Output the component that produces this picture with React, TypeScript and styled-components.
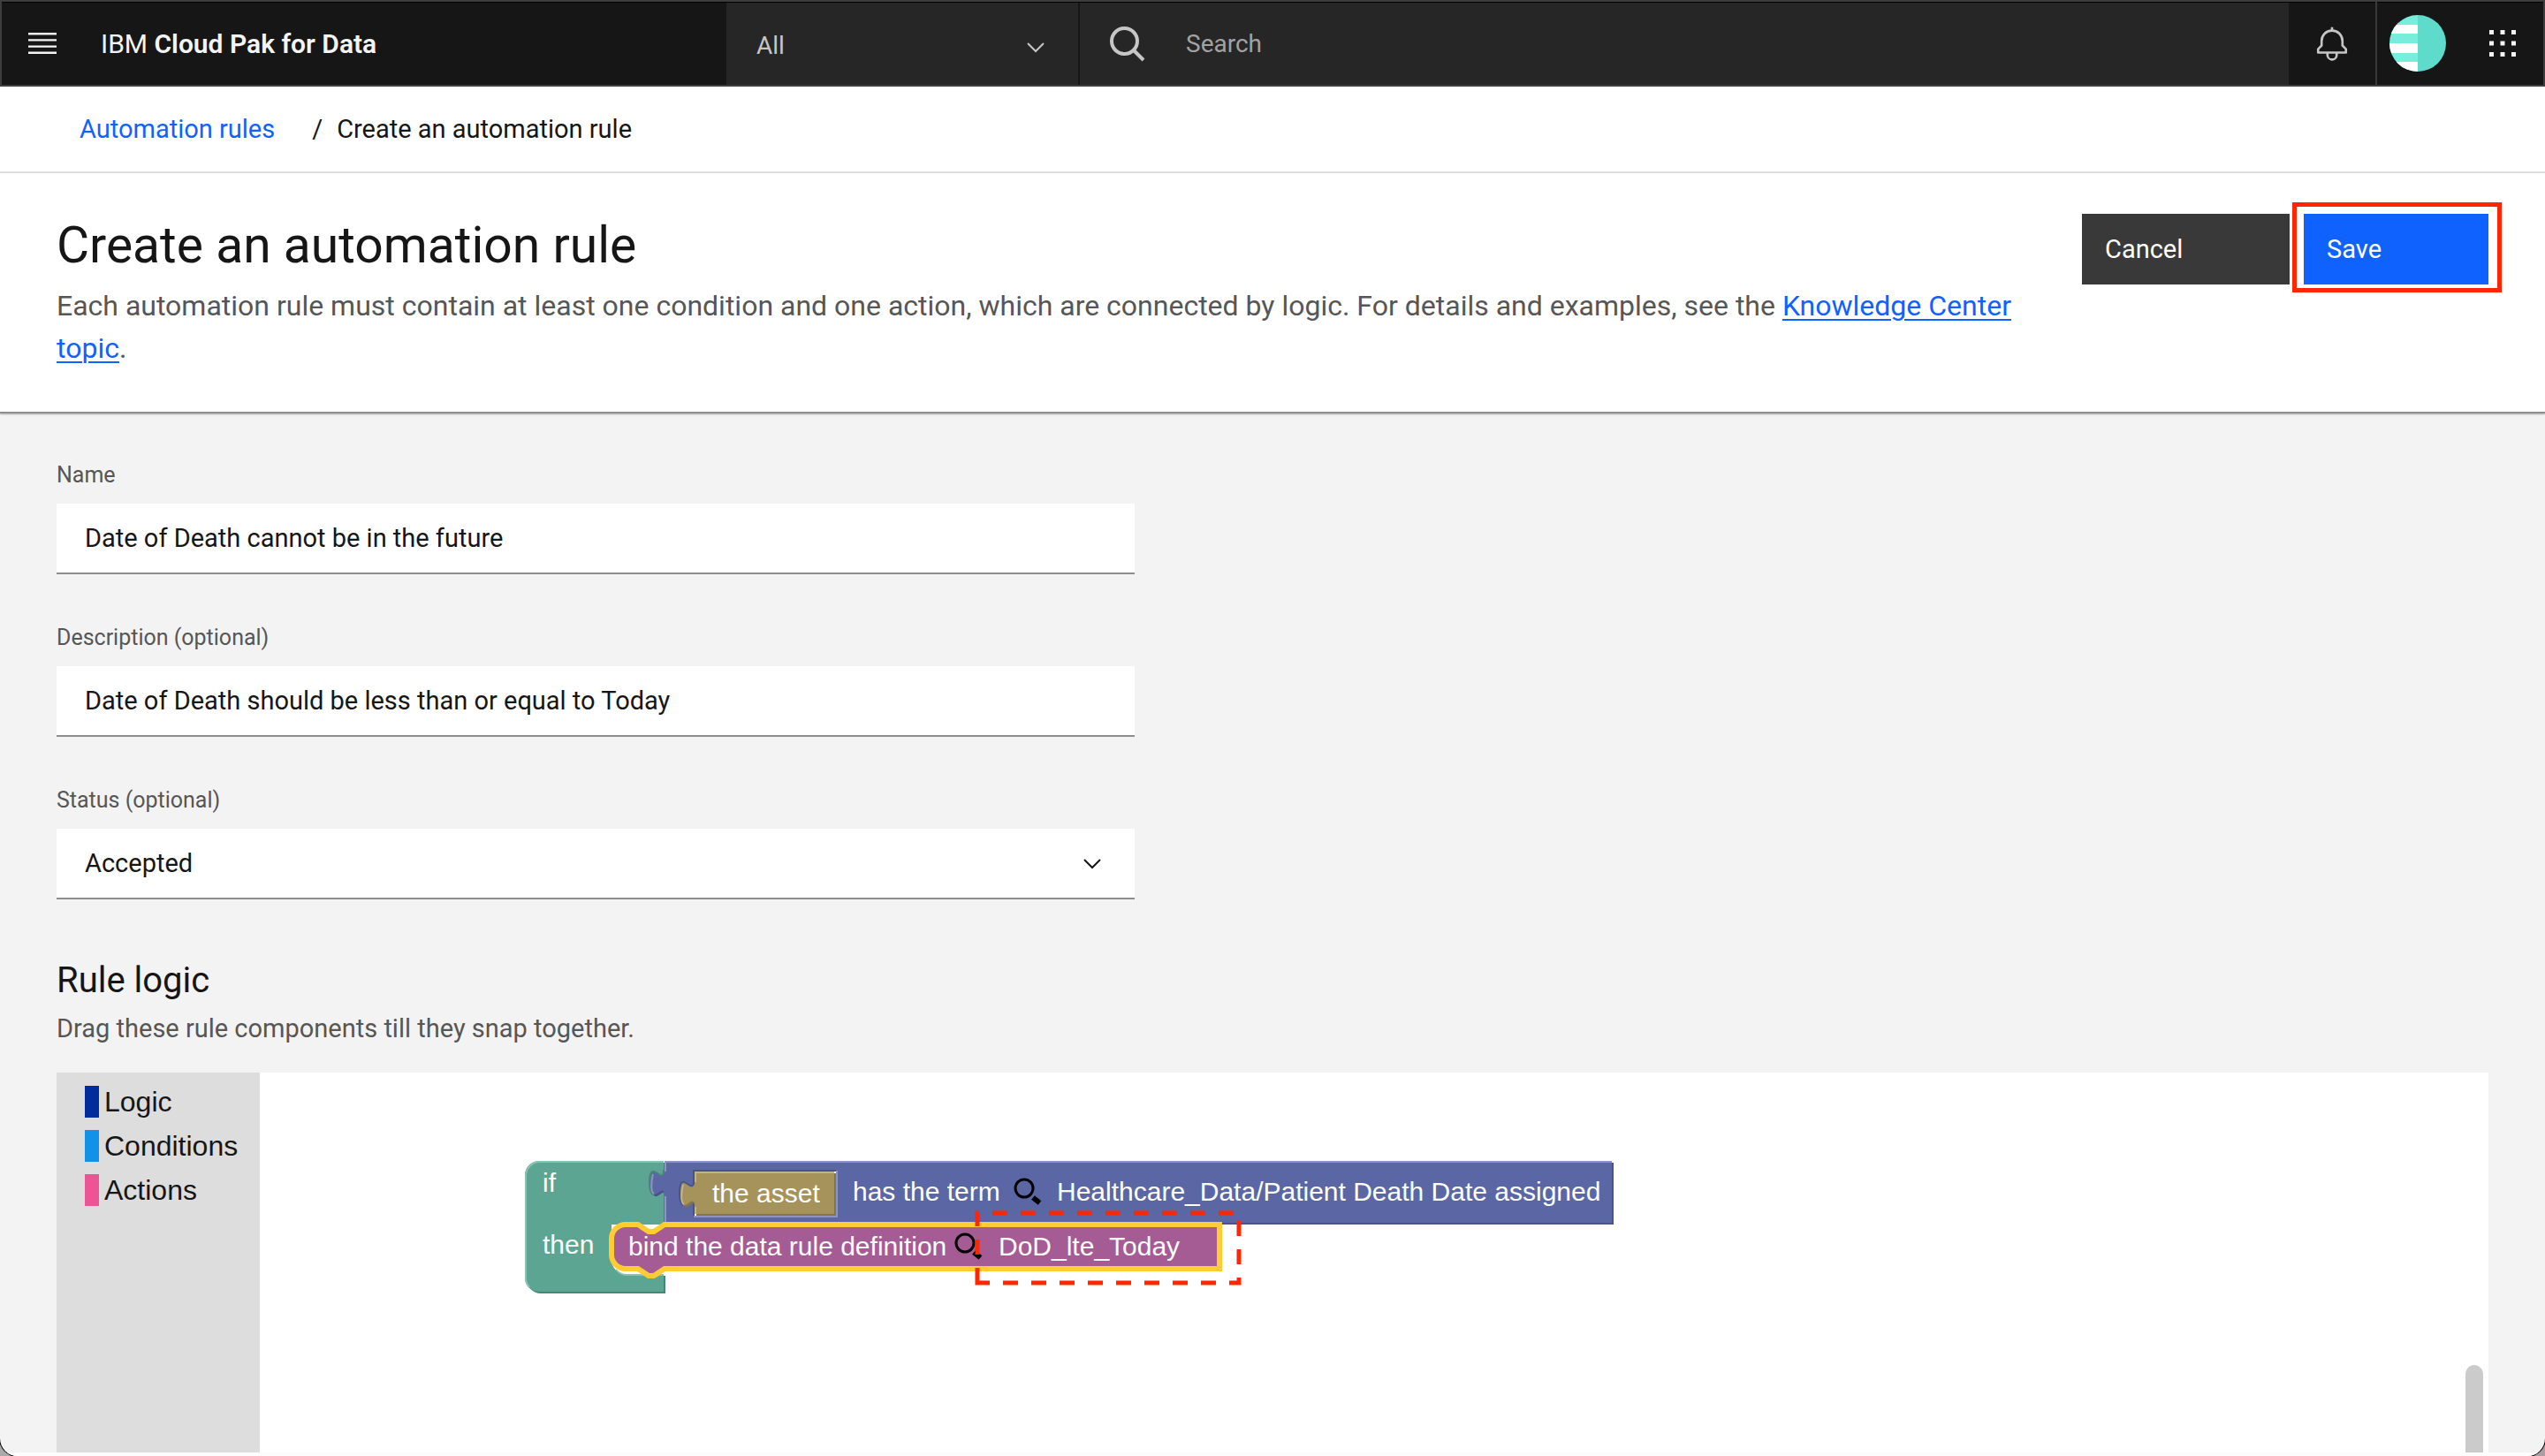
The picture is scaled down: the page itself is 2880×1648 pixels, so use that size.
import React from 'react';
import styled, { createGlobalStyle } from 'styled-components';

const GlobalStyle = createGlobalStyle`
  *, *::before, *::after { box-sizing: border-box; }
  html, body { margin: 0; padding: 0; }
  body {
    background: linear-gradient(90deg, #a9a9a9, #b09ca3);
    font-family: Roboto, "Noto Sans", sans-serif;
    font-size: 29px;
    color: #161616;
  }
  h1, h2, p, ol, ul { margin: 0; padding: 0; font-weight: 400; }
  ol, ul { list-style: none; }
  button, input, select { font: inherit; border: 0; border-radius: 0; outline: 0; }
`;

const Window = styled.div`
  display: flex;
  flex-direction: column;
  min-height: 100vh;
  overflow: hidden;
  background: #f3f3f3;
  border-radius: 0 0 20px 20px;
  box-shadow: 0 0 0 1px #000;
`;

/* ---------- top bar ---------- */

const TopBar = styled.header`
  display: grid;
  grid-template-columns: 820px 400px minmax(0, 1fr) 98px 190px;
  height: 98px;
  background: #161616;
  border: 2px solid #3d3d3d;
  box-shadow: inset 0 1px 0 #000;
  font-size: 28px;
`;

const Brand = styled.div`
  display: flex;
  align-items: center;
  gap: 46px;
  padding-left: 26px;
`;

const IconButton = styled.button`
  display: flex;
  align-items: center;
  justify-content: center;
  padding: 0;
  background: transparent;
  color: ${(p: { $tone?: string }) => p.$tone || '#f4f4f4'};
`;

const BrandName = styled.span`
  color: #f4f4f4;
  font-size: 30px;
  strong { font-weight: 600; }
`;

const Scope = styled.div`
  position: relative;
  margin-top: 1px;
  background: #262626;
  border-right: 2px solid #161616;
`;

const ScopeSelect = styled.select`
  width: 100%;
  height: 100%;
  padding: 4px 32px 0 34px;
  appearance: none;
  background: transparent;
  color: #c6c6c6;
`;

const Chevron = styled.svg`
  position: absolute;
  right: 38px;
  top: 50%;
  width: 20px;
  height: 12px;
  margin-top: ${(p: { $lowered?: boolean }) => (p.$lowered ? -2 : -6)}px;
  pointer-events: none;
`;

const SearchBox = styled.label`
  display: flex;
  align-items: center;
  gap: 46px;
  margin-top: 1px;
  padding-left: 34px;
  background: #262626;
  color: #c6c6c6;
`;

const SearchInput = styled.input`
  flex: 1;
  min-width: 0;
  padding: 0;
  background: transparent;
  color: #f4f4f4;
  &::placeholder { color: #a2a2a2; opacity: 1; }
`;

const Account = styled.div`
  display: flex;
  align-items: center;
  gap: 49px;
  padding-left: 14px;
  border-left: 2px solid #393939;
`;

/* ---------- page heading ---------- */

const Breadcrumb = styled.nav`
  height: 98px;
  padding-left: 90px;
  background: #fff;
  border-bottom: 2px solid #e0e0e0;
  ol { display: flex; align-items: center; height: 100%; }
  li + li::before { content: "/"; margin: 0 16px 0 42px; }
`;

const Link = styled.a`
  color: #0f62fe;
  text-decoration: ${(p: { $underline?: boolean }) => (p.$underline ? 'underline' : 'none')};
  text-decoration-thickness: 2px;
  text-underline-offset: 4px;
`;

const PageHeader = styled.section`
  display: flex;
  align-items: flex-start;
  gap: 48px;
  padding: 46px 64px 48px;
  background: #fff;
  border-bottom: 2px solid #8f8f8f;
  box-shadow: 0 1px 2px rgba(0, 0, 0, 0.3);
`;

const Intro = styled.div`
  flex: 1;
  min-width: 0;
`;

const Title = styled.h1`
  margin-bottom: 8px;
  font-size: 57px;
  line-height: 72px;
`;

const Lead = styled.p`
  color: #565656;
  font-size: 32px;
  line-height: 48px;
`;

const Actions = styled.div`
  display: flex;
  gap: 16px;
`;

const ActionButton = styled.button`
  width: ${(p: { $primary?: boolean }) => (p.$primary ? 209 : 235)}px;
  height: 80px;
  padding: 0 26px;
  text-align: left;
  color: #fff;
  background: ${(p: { $primary?: boolean }) => (p.$primary ? '#0f62fe' : '#393939')};
`;

const Highlighted = styled.div`
  position: relative;
  &::after {
    content: "";
    position: absolute;
    inset: -13px -15px -9px -13px;
    border: 5px solid #ff2600;
    pointer-events: none;
  }
`;

/* ---------- form ---------- */

const Body = styled.main`
  display: flex;
  flex: 1;
  flex-direction: column;
  padding: 53px 64px 0;
  border-bottom: 4px solid #fdfdfd;
`;

const Fields = styled.form`
  display: grid;
  gap: 55px;
  width: 1220px;
  max-width: 100%;
`;

const Field = styled.div`
  display: flex;
  flex-direction: column;
  gap: 15px;
`;

const Label = styled.label`
  color: #565656;
  font-size: 25px;
  line-height: 34px;
`;

const TextInput = styled.input`
  width: 100%;
  height: 80px;
  padding: 0 32px;
  background: #fff;
  color: #161616;
  border-bottom: 2px solid #8d8d8d;
`;

const SelectWrap = styled.div`
  position: relative;
`;

const Select = styled.select`
  display: block;
  width: 100%;
  height: 80px;
  padding: 0 32px;
  appearance: none;
  background: #fff;
  color: #161616;
  border-bottom: 2px solid #8d8d8d;
`;

const SectionTitle = styled.h2`
  margin: 68px 0 10px;
  font-size: 40px;
  line-height: 48px;
`;

const SectionHint = styled.p`
  margin-bottom: 30px;
  color: #565656;
  line-height: 40px;
`;

/* ---------- block editor ---------- */

const Editor = styled.section`
  display: flex;
  flex: 1;
  min-height: 400px;
  background: #fff;
  font-family: "Liberation Sans", Arial, sans-serif;
`;

const Toolbox = styled.ul`
  width: 230px;
  padding: 8px 0 0 32px;
  background: #ddd;
`;

const Category = styled.button`
  display: flex;
  align-items: center;
  gap: 6px;
  height: 50px;
  padding: 0;
  background: transparent;
  color: #161616;
  font-size: 32px;
  &::before {
    content: "";
    width: 16px;
    height: 36px;
    background: ${(p: { $color: string }) => p.$color};
  }
`;

const Workspace = styled.div`
  position: relative;
  flex: 1;
  min-width: 0;
`;

const Blocks = styled.svg`
  display: block;
  width: 100%;
  height: 100%;
  text {
    fill: #fff;
    font-size: 30px;
  }
`;

const ScrollThumb = styled.div`
  position: absolute;
  right: 6px;
  bottom: 0;
  width: 20px;
  height: 99px;
  background: #cbcbcb;
  border-radius: 10px 10px 0 0;
`;

const ChevronIcon = ({ color, lowered }: { color: string; lowered?: boolean }) => (
  <Chevron $lowered={lowered} viewBox="0 0 20 12" aria-hidden="true">
    <path d="M1 1l9 9 9-9" fill="none" stroke={color} strokeWidth="2" />
  </Chevron>
);

const MenuIcon = () => (
  <svg width="40" height="40" viewBox="0 0 20 20" fill="currentColor" aria-hidden="true">
    <path d="M2 14.8H18V16H2zM2 11.2H18V12.4H2zM2 7.6H18V8.8H2zM2 4H18V5.2H2z" />
  </svg>
);

const SearchIcon = () => (
  <svg width="40" height="40" viewBox="0 0 40 40" fill="none" stroke="currentColor" aria-hidden="true">
    <circle cx="16.5" cy="16.5" r="14.5" strokeWidth="4" />
    <path d="M27 27L38 38" strokeWidth="4" />
  </svg>
);

const BellIcon = () => (
  <svg width="42" height="42" viewBox="0 -1 32 32" fill="currentColor" aria-hidden="true">
    <path d="M28.7071,19.293,26,16.5859V13a10.0136,10.0136,0,0,0-9-9.9492V1H15V3.0508A10.0136,10.0136,0,0,0,6,13v3.5859L3.2929,19.293A1,1,0,0,0,3,20v3a1,1,0,0,0,1,1h7v.7768a5.152,5.152,0,0,0,4.5,5.1987A5.0057,5.0057,0,0,0,21,25V24h7a1,1,0,0,0,1-1V20A1,1,0,0,0,28.7071,19.293ZM19,25a3,3,0,0,1-6,0V24h6Zm8-3H5V20.4141L7.707,17.707A1,1,0,0,0,8,17V13a8,8,0,0,1,16,0v4a1,1,0,0,0,.293.707L27,20.4141Z" />
  </svg>
);

const Avatar = () => (
  <svg width="64" height="64" viewBox="0 0 64 64" aria-hidden="true">
    <clipPath id="avatar-clip"><circle cx="32" cy="32" r="32" /></clipPath>
    <g clipPath="url(#avatar-clip)">
      <rect width="32" height="64" fill="#76eedb" />
      <rect y="11" width="32" height="10" fill="#fff" />
      <rect y="32" width="32" height="11" fill="#fff" />
      <rect y="53" width="32" height="11" fill="#fff" />
      <rect x="32" width="32" height="64" fill="#5edbcb" />
    </g>
  </svg>
);

const DotsIcon = () => (
  <svg width="30" height="30" viewBox="0 0 30 30" fill="currentColor" aria-hidden="true">
    {[0, 12.5, 25].map((y) =>
      [0, 12.5, 25].map((x) => <rect key={`${x}-${y}`} x={x} y={y} width="5" height="5" />)
    )}
  </svg>
);

const Magnifier = ({ x, y }: { x: number; y: number }) => (
  <g transform={`translate(${x} ${y})`} fill="none" stroke="#000">
    <circle cx="-1" r="10" strokeWidth="3" />
    <path d="M9 10.5L16.5 16.5" strokeWidth="6" />
  </g>
);

const TAB = 'V40c0,-20 -16,16 -16,-15s16,5 16,-15';

const RuleBlocks = () => {
  const ifPath =
    'M0,16A16,16 0 0 1 16,0H157V72H128l-12,8h-6l-12,-8h16a16,16 0 0 0 -16,16v24a16,16 0 0 0 16,16H157V148H16A16,16 0 0 1 0,132z';
  const condition = `M0,0H1072V70H0${TAB}z`;
  const asset = `M0,0H158V48H0${TAB}z`;
  return (
    <g transform="translate(300 100)">
      {/* if / then container */}
      <path d={ifPath} fill="#49847a" transform="translate(2 2)" />
      <path d={ifPath} fill="#5ba592" />
      <path d="M98,72h60v56h-44a16,16 0 0 1 -16,-16z" fill="#fff" />
      <path d="M1,132V17A16,16 0 0 1 17,1H157M5,143A16,16 0 0 1 1,132M103,123a16,16 0 0 0 12,6H157" fill="none" stroke="#8cc0b2" strokeWidth="2" />
      <text x="20" y="35">if</text>
      <text x="20" y="105">then</text>

      {/* condition */}
      <g transform="translate(158 0)">
        <path d={condition} fill="#49528a" transform="translate(2 2)" />
        <path d={condition} fill="#5b67a5" />
        <path d="M-1,10c0,20 -16,-16 -16,15c0,8 2,12 4,13" fill="none" stroke="#49847a" strokeWidth="2" />
        <path d="M1,70V40M-12,37c-4,-2 -3,-15 -1,-22M1,12V1H1072" fill="none" stroke="#8c94c1" strokeWidth="2" />
      </g>

      {/* asset value, plugged into the condition */}
      <path d="M191,63V11H353" fill="none" stroke="#49528a" strokeWidth="2" />
      <path d="M191,63H353V11" fill="none" stroke="#8c94c1" strokeWidth="2" />
      <g transform="translate(192 12)">
        <path d={asset} fill="#847549" transform="translate(2 2)" />
        <path d={asset} fill="#a5935b" />
        <path d="M-1,10c0,20 -16,-16 -16,15c0,8 2,12 4,13" fill="none" stroke="#49528a" strokeWidth="2" />
        <path d="M1,48V40M-12,37c-4,-2 -3,-15 -1,-22M1,12V1H158" fill="none" stroke="#c0b38c" strokeWidth="2" />
        <path d="M158,0h2v2h-2zM0,48h2v2h-2z" fill="#fff" />
      </g>
      <text x="212" y="47">the asset</text>
      <text x="371" y="45">has the term</text>
      <Magnifier x={566} y={31} />
      <text x="602" y="45">Healthcare_Data/Patient Death Date assigned</text>

      {/* selected action */}
      <path
        d="M98,88a16,16 0 0 1 16,-16h14l12,8h6l12,-8H786V122H158l-12,8h-6l-12,-8H114a16,16 0 0 1 -16,-16z"
        fill="#a55b93"
        stroke="#fc3"
        strokeWidth="6"
      />
      <text x="117" y="107">bind the data rule definition</text>
      <Magnifier x={499} y={93} />
      <text x="536" y="107">DoD_lte_Today</text>

      {/* callout */}
      <path d="M512,138V59H808V138z" fill="none" stroke="#ff2600" strokeWidth="5" strokeDasharray="17 15" />
    </g>
  );
};

const categories = [
  { name: 'Logic', color: '#002d9c' },
  { name: 'Conditions', color: '#1192e8' },
  { name: 'Actions', color: '#ee5396' },
];

export default function App() {
  return (
    <>
      <GlobalStyle />
      <Window>
        <TopBar>
          <Brand>
            <IconButton aria-label="Menu"><MenuIcon /></IconButton>
            <BrandName>IBM <strong>Cloud Pak for Data</strong></BrandName>
          </Brand>
          <Scope>
            <ScopeSelect aria-label="Search scope" defaultValue="All">
              <option>All</option>
            </ScopeSelect>
            <ChevronIcon lowered color="#c6c6c6" />
          </Scope>
          <SearchBox>
            <SearchIcon />
            <SearchInput type="text" placeholder="Search" aria-label="Search" />
          </SearchBox>
          <IconButton $tone="#c6c6c6" aria-label="Notifications"><BellIcon /></IconButton>
          <Account>
            <IconButton aria-label="Account"><Avatar /></IconButton>
            <IconButton aria-label="Switch application"><DotsIcon /></IconButton>
          </Account>
        </TopBar>

        <Breadcrumb aria-label="Breadcrumb">
          <ol>
            <li><Link href="#rules">Automation rules</Link></li>
            <li aria-current="page">Create an automation rule</li>
          </ol>
        </Breadcrumb>

        <PageHeader>
          <Intro>
            <Title>Create an automation rule</Title>
            <Lead>
              Each automation rule must contain at least one condition and one action, which are
              connected by logic. For details and examples, see the{' '}
              <Link $underline href="#knowledge-center">Knowledge Center topic</Link>.
            </Lead>
          </Intro>
          <Actions>
            <ActionButton type="button">Cancel</ActionButton>
            <Highlighted>
              <ActionButton $primary type="button">Save</ActionButton>
            </Highlighted>
          </Actions>
        </PageHeader>

        <Body>
          <Fields>
            <Field>
              <Label htmlFor="name">Name</Label>
              <TextInput id="name" type="text" defaultValue="Date of Death cannot be in the future" />
            </Field>
            <Field>
              <Label htmlFor="description">Description (optional)</Label>
              <TextInput id="description" type="text" defaultValue="Date of Death should be less than or equal to Today" />
            </Field>
            <Field>
              <Label htmlFor="status">Status (optional)</Label>
              <SelectWrap>
                <Select id="status" defaultValue="Accepted">
                  <option>Accepted</option>
                </Select>
                <ChevronIcon color="#161616" />
              </SelectWrap>
            </Field>
          </Fields>

          <SectionTitle>Rule logic</SectionTitle>
          <SectionHint>Drag these rule components till they snap together.</SectionHint>

          <Editor>
            <Toolbox>
              {categories.map((c) => (
                <li key={c.name}>
                  <Category type="button" $color={c.color}>{c.name}</Category>
                </li>
              ))}
            </Toolbox>
            <Workspace>
              <Blocks>
                <RuleBlocks />
              </Blocks>
              <ScrollThumb />
            </Workspace>
          </Editor>
        </Body>
      </Window>
    </>
  );
}
